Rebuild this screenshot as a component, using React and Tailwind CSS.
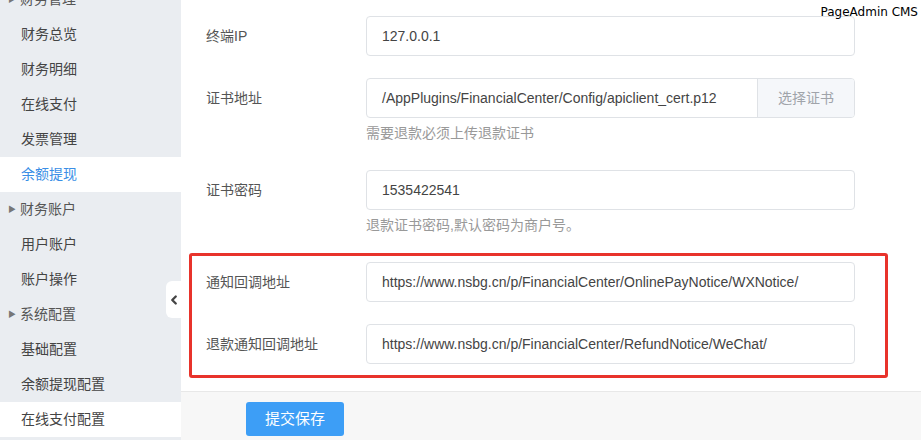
import { ChevronLeft } from 'lucide-react';

const menu = [
  { label: '财务管理', group: true },
  { label: '财务总览' },
  { label: '财务明细' },
  { label: '在线支付' },
  { label: '发票管理' },
  { label: '余额提现', active: true },
  { label: '财务账户', group: true },
  { label: '用户账户' },
  { label: '账户操作' },
  { label: '系统配置', group: true },
  { label: '基础配置' },
  { label: '余额提现配置' },
  { label: '在线支付配置', current: true },
];

function Field({ label, value, help, addon, inBox }) {
  return (
    <div className={inBox ? 'flex pl-[14px] pr-[30px]' : 'flex pl-[17px] pr-[33px]'}>
      <div className="w-[160px] h-[40px] leading-[40px] text-[14px] text-[#555]">{label}</div>
      <div className="flex-1">
        <div className="flex h-[40px] border border-[#dfe2e6] rounded-[4px] overflow-hidden bg-white">
          <div className="flex-1 px-[15px] leading-[38px] text-[14px] text-[#444] whitespace-nowrap overflow-hidden">{value}</div>
          {addon && (
            <div className="w-[97px] border-l border-[#dfe2e6] bg-[#f5f7fa] text-center leading-[38px] text-[14px] text-[#a0a4aa]">{addon}</div>
          )}
        </div>
        {help && <div className="h-[30px] leading-[30px] text-[14px] text-[#999]">{help}</div>}
      </div>
    </div>
  );
}

export default function App() {
  return (
    <div className="relative flex w-[921px] h-[440px] overflow-hidden bg-white" style={{ fontFamily: '"Liberation Sans", "Noto Sans CJK SC", sans-serif' }}>
      {/* sidebar */}
      <div className="w-[181px] shrink-0 bg-[#eaedf1]">
        <div className="-mt-[18px]">
          {menu.map((m, i) => (
            <div
              key={i}
              className={
                'h-[35px] leading-[35px] text-[14px] ' +
                (m.active ? 'bg-white text-[#3a8ee6] pl-[21px]' : m.current ? 'bg-white text-[#444] pl-[21px]' : m.group ? 'text-[#555] pl-[8px] flex items-center' : 'text-[#444] pl-[21px]')
              }
            >
              {m.group && <span className="text-[8px] text-[#777] w-[12px] inline-block">▶</span>}
              {m.label}
            </div>
          ))}
        </div>
      </div>

      {/* content */}
      <div className="flex-1 flex flex-col">
        <div className="pl-[8px] pr-[33px] pt-[16px]">
          <div className="mb-[22px]">
            <Field label="终端IP" value="127.0.0.1" />
          </div>
          <Field label="证书地址" value="/AppPlugins/FinancialCenter/Config/apiclient_cert.p12" addon="选择证书" help="需要退款必须上传退款证书" />
          <div className="mt-[22px]">
            <Field label="证书密码" value="1535422541" help="退款证书密码,默认密码为商户号。" />
          </div>
          <div className="mt-[13px] border-[3px] border-[#e8332b] rounded-[3px] pt-[6px] pb-[11px]">
            <Field inBox label="通知回调地址" value="https://www.nsbg.cn/p/FinancialCenter/OnlinePayNotice/WXNotice/" />
            <div className="mt-[22px]">
              <Field inBox label="退款通知回调地址" value="https://www.nsbg.cn/p/FinancialCenter/RefundNotice/WeChat/" />
            </div>
          </div>
        </div>
        <div className="mt-[13px] flex-1 border-t border-[#e8e8e8] bg-[#f7f7f7] pl-[65px] pt-[10px]">
          <button className="w-[98px] h-[34px] rounded-[3px] bg-[#3d9ef6] text-white text-[15px]">提交保存</button>
        </div>
      </div>

      {/* collapse handle */}
      <div className="absolute left-[166px] top-[281px] w-[16px] h-[37px] bg-white rounded-l-[6px] flex items-center justify-center">
        <ChevronLeft size={14} strokeWidth={4} className="text-[#444]" />
      </div>

      <div className="absolute right-[3px] top-[3px] text-[12px] text-black" style={{ fontFamily: '"DejaVu Sans", sans-serif' }}>PageAdmin CMS</div>
    </div>
  );
}
